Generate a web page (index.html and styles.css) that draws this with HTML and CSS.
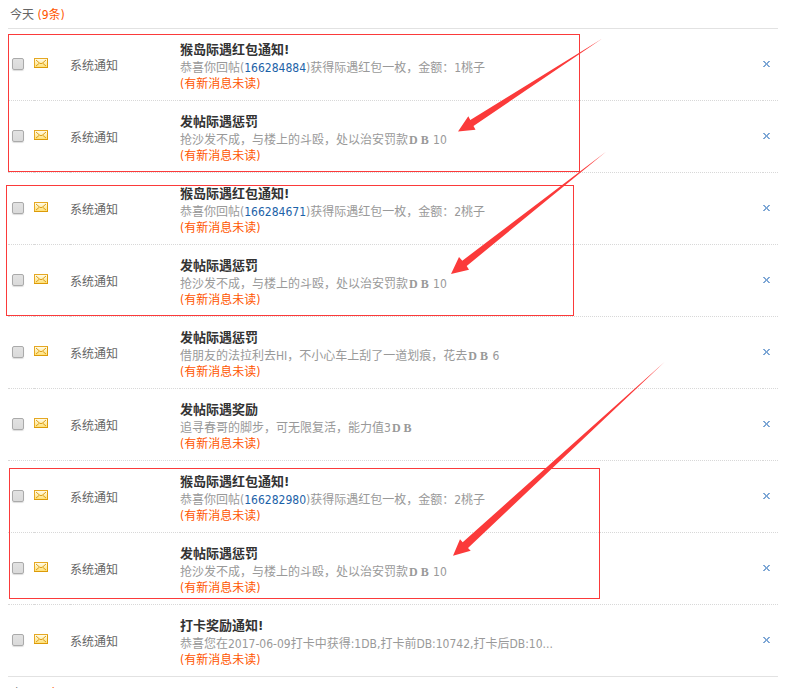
FILE: index.html
```html
<!DOCTYPE html>
<html lang="zh-CN">
<head>
<meta charset="utf-8">
<title>系统通知</title>
<link rel="stylesheet" href="styles.css">
</head>
<body>
<svg class="defs" aria-hidden="true">
  <defs>
    <linearGradient id="paper" x1="0" y1="0" x2="0" y2="1"><stop offset="0" stop-color="#fffdf0"/><stop offset="1" stop-color="#ffdf70"/></linearGradient>
    <symbol id="mail" viewBox="0 0 14 10">
      <rect x="0.5" y="0.5" width="13" height="9" fill="url(#paper)" stroke="#e5a823"/>
      <path d="M2 2l4 3.500h2L12 2M2 8l3-2.500M12 8L9 5.500" fill="none" stroke="#dda01c"/>
      <path d="M0 9.500h14M13.500 1v9" stroke="#dc9a08" fill="none"/>
    </symbol>
    <symbol id="close" viewBox="0 0 7 6">
      <path d="M0 0h2v1h1v1h1v-1h1v-1h2v1h-1v1h-1v2h1v1h1v1h-2v-1h-1v-1h-1v1h-1v1h-2v-1h1v-1h1v-2h-1v-1h-1z" fill="#7fa8d6"/>
    </symbol>
  </defs>
</svg>
<main class="messages">
  <h2 class="day">今天 <span class="count">(9条)</span></h2>
  <table class="list">
    <colgroup><col class="col-check"><col class="col-icon"><col class="col-from"><col><col class="col-close"></colgroup>
    <tbody>
      <tr>
        <td><input class="check" type="checkbox" aria-label="选择"></td>
        <td><svg class="mail"><use href="#mail"/></svg></td>
        <td class="words">系统通知</td>
        <td class="words"><div class="title">猴岛际遇红包通知!</div><div class="text">恭喜你回帖(<a href="#">166284884</a>)获得际遇红包一枚，金额：1桃子</div><div class="unread">(有新消息未读)</div></td>
        <td><button class="close" aria-label="删除"><svg><use href="#close"/></svg></button></td>
      </tr>
      <tr>
        <td><input class="check" type="checkbox" aria-label="选择"></td>
        <td><svg class="mail"><use href="#mail"/></svg></td>
        <td class="words">系统通知</td>
        <td class="words"><div class="title">发帖际遇惩罚</div><div class="text">抢沙发不成，与楼上的斗殴，处以治安罚款<b>D B</b> 10</div><div class="unread">(有新消息未读)</div></td>
        <td><button class="close" aria-label="删除"><svg><use href="#close"/></svg></button></td>
      </tr>
      <tr>
        <td><input class="check" type="checkbox" aria-label="选择"></td>
        <td><svg class="mail"><use href="#mail"/></svg></td>
        <td class="words">系统通知</td>
        <td class="words"><div class="title">猴岛际遇红包通知!</div><div class="text">恭喜你回帖(<a href="#">166284671</a>)获得际遇红包一枚，金额：2桃子</div><div class="unread">(有新消息未读)</div></td>
        <td><button class="close" aria-label="删除"><svg><use href="#close"/></svg></button></td>
      </tr>
      <tr>
        <td><input class="check" type="checkbox" aria-label="选择"></td>
        <td><svg class="mail"><use href="#mail"/></svg></td>
        <td class="words">系统通知</td>
        <td class="words"><div class="title">发帖际遇惩罚</div><div class="text">抢沙发不成，与楼上的斗殴，处以治安罚款<b>D B</b> 10</div><div class="unread">(有新消息未读)</div></td>
        <td><button class="close" aria-label="删除"><svg><use href="#close"/></svg></button></td>
      </tr>
      <tr>
        <td><input class="check" type="checkbox" aria-label="选择"></td>
        <td><svg class="mail"><use href="#mail"/></svg></td>
        <td class="words">系统通知</td>
        <td class="words"><div class="title">发帖际遇惩罚</div><div class="text">借朋友的法拉利去HI，不小心车上刮了一道划痕，花去<b>D B</b> 6</div><div class="unread">(有新消息未读)</div></td>
        <td><button class="close" aria-label="删除"><svg><use href="#close"/></svg></button></td>
      </tr>
      <tr>
        <td><input class="check" type="checkbox" aria-label="选择"></td>
        <td><svg class="mail"><use href="#mail"/></svg></td>
        <td class="words">系统通知</td>
        <td class="words"><div class="title">发帖际遇奖励</div><div class="text">追寻春哥的脚步，可无限复活，能力值3<b>D B</b></div><div class="unread">(有新消息未读)</div></td>
        <td><button class="close" aria-label="删除"><svg><use href="#close"/></svg></button></td>
      </tr>
      <tr>
        <td><input class="check" type="checkbox" aria-label="选择"></td>
        <td><svg class="mail"><use href="#mail"/></svg></td>
        <td class="words">系统通知</td>
        <td class="words"><div class="title">猴岛际遇红包通知!</div><div class="text">恭喜你回帖(<a href="#">166282980</a>)获得际遇红包一枚，金额：2桃子</div><div class="unread">(有新消息未读)</div></td>
        <td><button class="close" aria-label="删除"><svg><use href="#close"/></svg></button></td>
      </tr>
      <tr>
        <td><input class="check" type="checkbox" aria-label="选择"></td>
        <td><svg class="mail"><use href="#mail"/></svg></td>
        <td class="words">系统通知</td>
        <td class="words"><div class="title">发帖际遇惩罚</div><div class="text">抢沙发不成，与楼上的斗殴，处以治安罚款<b>D B</b> 10</div><div class="unread">(有新消息未读)</div></td>
        <td><button class="close" aria-label="删除"><svg><use href="#close"/></svg></button></td>
      </tr>
      <tr>
        <td><input class="check" type="checkbox" aria-label="选择"></td>
        <td><svg class="mail"><use href="#mail"/></svg></td>
        <td class="words">系统通知</td>
        <td class="words"><div class="title">打卡奖励通知!</div><div class="text">恭喜您在2017-06-09打卡中获得:1DB,打卡前DB:10742,打卡后DB:10...</div><div class="unread">(有新消息未读)</div></td>
        <td><button class="close" aria-label="删除"><svg><use href="#close"/></svg></button></td>
      </tr>
    </tbody>
  </table>
  <h2 class="day">昨天 <span class="count">(9条)</span></h2>
</main>
<svg class="marks" width="787" height="688" viewBox="0 0 787 688" aria-hidden="true">
  <g fill="none" stroke="#fb3a3a">
    <rect x="8.500" y="34.500" width="571" height="137"/>
    <rect x="6.500" y="185.500" width="567" height="130"/>
    <rect x="9.500" y="468.500" width="590" height="130"/>
  </g>
  <g fill="#fb3a3a">
    <path d="M458 131.500L468.300 116.300L470.300 120L602 38.700L473.500 126L475.500 129.800Z"/>
    <path d="M451 274L459 257L462.300 260.700L606 151.700L466.700 266L469 269.700Z"/>
    <path d="M453 555.700L460 539.300L462.700 542.300L664.500 362L468 548L470.700 550.700Z"/>
  </g>
</svg>
</body>
</html>
```
FILE: styles.css
```css
* {
  box-sizing: border-box;
}

html {
  overflow: hidden;
}

body {
  margin: 0;
  background: #fff;
  color: #666;
  font: 12px/18px "DejaVu Sans Condensed", "Noto Sans CJK SC", sans-serif;
}

.defs {
  position: absolute;
  width: 0;
  height: 0;
}

.messages {
  margin: 0 9px 0 8px;
}

.day {
  margin: 0;
  padding: 6px 2px 4px;
  border-bottom: 1px solid #e2e2e2;
  font-size: 12px;
  font-weight: normal;
  line-height: 18px;
}

.list + .day {
  padding-top: 8px;
}

.count,
.unread {
  color: #f50;
}

.list {
  width: 100%;
  table-layout: fixed;
  border-collapse: separate;
  border-spacing: 0;
}

.col-check {
  width: 26px;
}

.col-icon {
  width: 36px;
}

.col-from {
  width: 110px;
}

.col-close {
  width: 15px;
}

td {
  height: 72px;
  padding: 0 0 2px;
  border-bottom: 1px dotted #d8d8d8;
  vertical-align: middle;
}

.words {
  padding: 2px 0 0;
}

tr:last-child td {
  border-bottom: 1px solid #e2e2e2;
}

.check {
  display: block;
  appearance: none;
  width: 12px;
  height: 12px;
  margin: 0 4px;
  border: 1px solid #aaa;
  border-radius: 2px;
  background: linear-gradient(#e2e2e2, #dadada);
  box-shadow: 0 1px 1px #ddd;
}

.mail {
  display: block;
  width: 14px;
  height: 10px;
  margin-bottom: 2px;
}

.title {
  color: #333;
  font-size: 13px;
  font-weight: bold;
}

.text {
  overflow: hidden;
  color: #999;
  white-space: nowrap;
  text-overflow: ellipsis;
}

.text a {
  color: #1c62a8;
  text-decoration: none;
}

.text b {
  padding: 0 1px;
  font-family: "Liberation Serif", serif;
}

.unread {
  line-height: 14px;
}

.close {
  display: block;
  width: 8px;
  padding: 0;
  border: 0;
  background: none;
  cursor: pointer;
}

.close svg {
  display: block;
  width: 7px;
  height: 6px;
}

.marks {
  position: absolute;
  top: 0;
  left: 0;
  pointer-events: none;
}
```
